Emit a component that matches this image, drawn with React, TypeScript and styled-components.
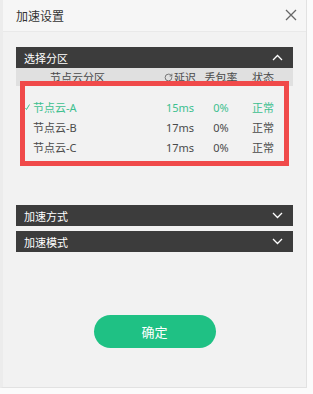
import React from "react";
import styled, { createGlobalStyle } from "styled-components";
import { RotateCw } from "lucide-react";

const Global = createGlobalStyle`
  html, body { margin: 0; padding: 0; background: #fbfbfb; }
  body { font-family: "Noto Sans", "Noto Sans CJK SC", sans-serif; }
  * { box-sizing: border-box; }
`;

const Window = styled.div`
  width: 307px;
  height: 388px;
  background: #f2f2f2;
  border-right: 1px solid #e2e2e2;
  border-bottom: 1px solid #e2e2e2;
  border-left: 3px solid #ececec;
  display: flex;
  flex-direction: column;
`;

const TitleBar = styled.div`
  height: 32px;
  flex: none;
  background: #f6f6f6;
  border-bottom: 1px solid #e9e9e9;
  display: flex;
  align-items: center;
  justify-content: space-between;
  padding: 0 8px 0 13px;
`;

const Title = styled.div`
  font-size: 12px;
  color: #333;
  font-family: "Noto Sans CJK SC", sans-serif;
`;

const Close = styled.div`
  width: 14px;
  height: 14px;
  display: flex;
  align-items: center;
  justify-content: center;
  margin-top: -1px;
`;

const Body = styled.div`
  display: flex;
  flex-direction: column;
  padding: 15px 13px 0 13px;
`;

const Section = styled.div`
  position: relative;
  display: flex;
  flex-direction: column;
`;

const Bar = styled.div<{ $gap?: number }>`
  height: 21px;
  background: #3c3c3c;
  color: #fff;
  font-size: 11px;
  font-family: "Noto Sans CJK SC", sans-serif;
  display: flex;
  align-items: center;
  justify-content: space-between;
  padding: 0 10px 0 8px;
  margin-top: ${(p) => p.$gap ?? 0}px;
`;

const HeadRow = styled.div`
  height: 18px;
  background: #e0e0e0;
  display: grid;
  grid-template-columns: 140px 48px 34px 50px;
  align-items: center;
  font-size: 11px;
  color: #4a4a4a;
  font-family: "Noto Sans CJK SC", sans-serif;
`;

const HeadCell = styled.div<{ $left?: boolean }>`
  display: flex;
  align-items: center;
  justify-content: ${(p) => (p.$left ? "flex-start" : "center")};
  padding-left: ${(p) => (p.$left ? "34px" : "0")};
  gap: 1px;
  white-space: nowrap;
`;

const Rows = styled.div`
  padding: 11px 0 48px 0;
  display: flex;
  flex-direction: column;
`;

const Row = styled.div<{ $active?: boolean }>`
  height: 20px;
  display: grid;
  grid-template-columns: 140px 48px 34px 50px;
  align-items: center;
  font-size: 11px;
  color: ${(p) => (p.$active ? "#3cc08f" : "#4a4a4a")};
`;

const NameCell = styled.div`
  position: relative;
  padding-left: 17px;
  white-space: nowrap;
`;

const Check = styled.svg`
  position: absolute;
  left: 9px;
  top: 5px;
`;

const Cell = styled.div`
  text-align: center;
  white-space: nowrap;
`;

const Highlight = styled.div`
  position: absolute;
  left: 4px;
  top: 34px;
  width: 269px;
  height: 85px;
  border: 5px solid #f04a4a;
  pointer-events: none;
`;

const Footer = styled.div`
  display: flex;
  justify-content: center;
  padding-top: 63px;
`;

const Button = styled.button`
  width: 122px;
  height: 33px;
  border: none;
  border-radius: 17px;
  background: #1fc184;
  color: #fff;
  font-size: 13px;
  font-family: "Noto Sans CJK SC", sans-serif;
`;

const Caret = ({ up }: { up?: boolean }) => (
  <svg width="11" height="7" viewBox="0 0 11 7">
    <path
      d={up ? "M1 6 L5.5 1.5 L10 6" : "M1 1 L5.5 5.5 L10 1"}
      fill="none"
      stroke="#fff"
      strokeWidth="1.3"
    />
  </svg>
);

const rows = [
  { name: "节点云-A", delay: "15ms", loss: "0%", status: "正常", active: true },
  { name: "节点云-B", delay: "17ms", loss: "0%", status: "正常" },
  { name: "节点云-C", delay: "17ms", loss: "0%", status: "正常" },
];

export default function App() {
  return (
    <>
      <Global />
      <Window>
        <TitleBar>
          <Title>加速设置</Title>
          <Close>
            <svg width="12" height="12" viewBox="0 0 12 12">
              <path d="M1 1 L11 11 M11 1 L1 11" stroke="#666" strokeWidth="1.3" />
            </svg>
          </Close>
        </TitleBar>
        <Body>
          <Section>
            <Bar>
              <span>选择分区</span>
              <Caret up />
            </Bar>
            <HeadRow>
              <HeadCell $left>节点云分区</HeadCell>
              <HeadCell>
                <RotateCw size={9} color="#555" strokeWidth={2} />
                延迟
              </HeadCell>
              <HeadCell>丢包率</HeadCell>
              <HeadCell>状态</HeadCell>
            </HeadRow>
            <Rows>
              {rows.map((r) => (
                <Row key={r.name} $active={r.active}>
                  <NameCell>
                    {r.active && (
                      <Check width="5" height="6" viewBox="0 0 5 6">
                        <path d="M0.5 4 L1.5 5.5 L4.5 0.5" fill="none" stroke="#3cc08f" strokeWidth="1" />
                      </Check>
                    )}
                    {r.name}
                  </NameCell>
                  <Cell>{r.delay}</Cell>
                  <Cell>{r.loss}</Cell>
                  <Cell>{r.status}</Cell>
                </Row>
              ))}
            </Rows>
            <Highlight />
          </Section>
          <Bar $gap={0}>
            <span>加速方式</span>
            <Caret />
          </Bar>
          <Bar $gap={5}>
            <span>加速模式</span>
            <Caret />
          </Bar>
          <Footer>
            <Button>确定</Button>
          </Footer>
        </Body>
      </Window>
    </>
  );
}
